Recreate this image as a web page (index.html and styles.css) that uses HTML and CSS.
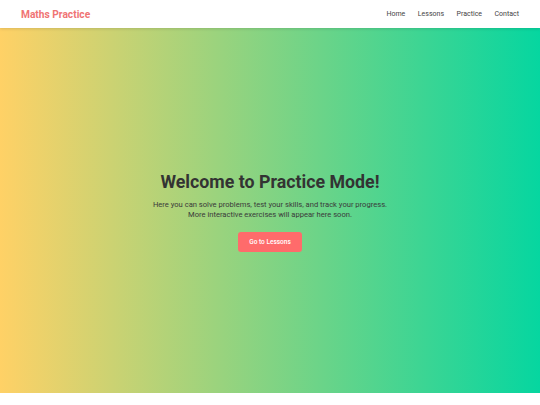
FILE: index.html
```html
<!DOCTYPE html>
<html lang="en">
<head>
<meta charset="utf-8">
<title>Maths Practice</title>
<link rel="stylesheet" href="styles.css">
</head>
<body>
<header class="site-header">
  <div class="logo">Maths Practice</div>
  <nav class="nav">
    <a href="#">Home</a>
    <a href="#">Lessons</a>
    <a href="#">Practice</a>
    <a href="#">Contact</a>
  </nav>
</header>
<main class="hero">
  <h1 class="hero-title">Welcome to Practice Mode!</h1>
  <p class="hero-text">Here you can solve problems, test your skills, and track your progress.<br>More interactive exercises will appear here soon.</p>
  <a class="btn" href="#">Go to Lessons</a>
</main>
</body>
</html>
```
FILE: styles.css
```css
* { box-sizing: border-box; }
html, body { margin: 0; padding: 0; }
body {
  font-family: Roboto, "Liberation Sans", sans-serif;
  background: #fff;
  color: #333;
}
.site-header {
  height: 28px;
  display: flex;
  align-items: center;
  justify-content: space-between;
  padding: 0 21px;
  background: #fff;
  box-shadow: 0 1px 3px rgba(0,0,0,0.12);
  position: relative;
  z-index: 1;
}
.logo {
  font-size: 10.2px;
  font-weight: 700;
  color: #f07474;
}
.nav {
  display: flex;
  gap: 12.5px;
}
.nav a {
  font-size: 7px;
  color: #444;
  text-decoration: none;
}
.hero {
  min-height: 365px;
  background: linear-gradient(90deg, #ffd166, #06d6a0);
  display: flex;
  flex-direction: column;
  align-items: center;
  justify-content: center;
  text-align: center;
  padding: 0 20px;
}
.hero-title {
  margin: 2px 0 8px;
  font-size: 17.8px;
  font-weight: 700;
  color: #333;
}
.hero-text {
  margin: 0 0 12px;
  font-size: 7.6px;
  line-height: 1.3;
  color: #3a3a3a;
}
.btn {
  display: inline-block;
  background: #ff6b6b;
  color: #fff;
  font-size: 6.5px;
  font-weight: 500;
  text-decoration: none;
  padding: 6px 11px;
  border-radius: 3px;
}
```
